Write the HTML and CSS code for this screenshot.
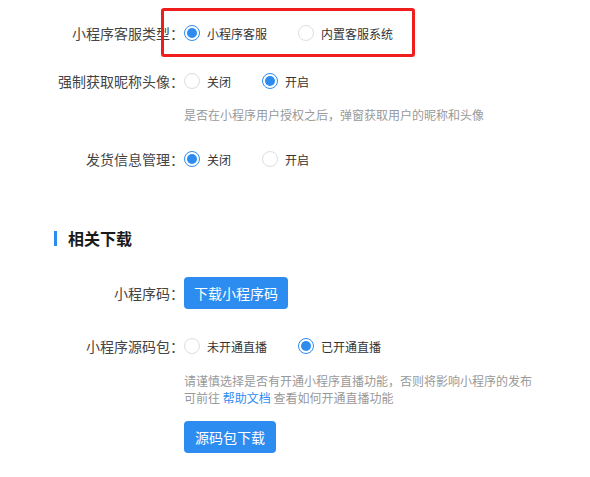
FILE: index.html
```html
<!DOCTYPE html>
<html lang="zh-CN">
<head>
    <meta charset="UTF-8">
    <meta name="viewport" content="width=device-width, initial-scale=1.0">
    <title>小程序设置</title>
    <link rel="stylesheet" href="styles.css">
</head>
<body>

<div class="page">
    <div class="form-item first">
        <label class="form-label">小程序客服类型：</label>
        <div class="form-content">
            <span class="radio checked"><i></i>小程序客服</span>
            <span class="radio"><i></i>内置客服系统</span>
        </div>
    </div>

    <div class="form-item with-help">
        <label class="form-label">强制获取昵称头像：</label>
        <div class="form-content">
            <span class="radio"><i></i>关闭</span>
            <span class="radio checked"><i></i>开启</span>
        </div>
    </div>
    <div class="help help-auth">是否在小程序用户授权之后，弹窗获取用户的昵称和头像</div>

    <div class="form-item">
        <label class="form-label">发货信息管理：</label>
        <div class="form-content">
            <span class="radio checked"><i></i>关闭</span>
            <span class="radio"><i></i>开启</span>
        </div>
    </div>

    <h2 class="section-title">相关下载</h2>

    <div class="form-item qrcode">
        <label class="form-label">小程序码：</label>
        <div class="form-content">
            <button class="btn">下载小程序码</button>
        </div>
    </div>

    <div class="form-item source">
        <label class="form-label">小程序源码包：</label>
        <div class="form-content">
            <span class="radio"><i></i>未开通直播</span>
            <span class="radio checked"><i></i>已开通直播</span>
        </div>
    </div>
    <div class="help help-live">
        请谨慎选择是否有开通小程序直播功能，否则将影响小程序的发布<br>
        可前往 <a href="#">帮助文档</a> 查看如何开通直播功能
    </div>
    <div class="download">
        <button class="btn">源码包下载</button>
    </div>

    <div class="highlight"></div>
</div>

</body>
</html>
```

FILE: styles.css
```css
* {
    box-sizing: border-box;
    margin: 0;
    padding: 0;
}
body {
    font-family: "Noto Sans CJK SC", "Noto Sans", sans-serif;
    background: #fff;
    color: #333;
    width: 590px;
    height: 477px;
    overflow: hidden;
}
.page {
    position: relative;
    padding-top: 17px;
}
.form-item {
    display: flex;
    align-items: center;
    height: 32px;
    margin-bottom: 16px;
}
.form-item.with-help {
    margin-bottom: 0;
}
.form-label {
    width: 184px;
    flex-shrink: 0;
    text-align: right;
    font-size: 14px;
    color: #444;
}
.form-content {
    display: flex;
    align-items: center;
}
.radio {
    display: inline-flex;
    align-items: center;
    font-size: 12px;
    color: #333;
    margin-right: 31px;
}
.radio i {
    flex-shrink: 0;
    width: 16px;
    height: 16px;
    border: 1px solid #dcdee2;
    border-radius: 50%;
    margin-right: 7px;
    display: inline-flex;
    align-items: center;
    justify-content: center;
}
.radio.checked i {
    border-color: #2d8cf0;
}
.radio.checked i::after {
    content: "";
    width: 10px;
    height: 10px;
    border-radius: 50%;
    background: #2d8cf0;
}
.help {
    padding-left: 184px;
    font-size: 12px;
    line-height: 17px;
    color: #999;
}
.help-auth {
    margin-top: 9px;
    margin-bottom: 20px;
}
.help a {
    color: #2d8cf0;
    text-decoration: none;
}
.section-title {
    display: flex;
    align-items: center;
    margin-top: 51px;
    padding-left: 54px;
    height: 24px;
    font-size: 16px;
    font-weight: bold;
    color: #1a1a1a;
}
.section-title::before {
    content: "";
    width: 3px;
    height: 15px;
    background: #2d8cf0;
    margin-right: 11px;
}
.form-item.qrcode {
    margin-top: 27px;
    margin-bottom: 21px;
}
.form-item.source {
    margin-bottom: 0;
}
.help-live {
    margin-top: 10px;
}
.download {
    padding-left: 184px;
    margin-top: 15px;
}
.btn {
    height: 32px;
    padding: 0 10px;
    border: none;
    border-radius: 4px;
    background: #2d8cf0;
    color: #fff;
    font-family: inherit;
    font-size: 14px;
}
.download .btn {
    padding: 0 11px;
}
.highlight {
    position: absolute;
    left: 161px;
    top: 8px;
    width: 254px;
    height: 49px;
    border: 3px solid #f01d1d;
    border-radius: 3px;
}
```
